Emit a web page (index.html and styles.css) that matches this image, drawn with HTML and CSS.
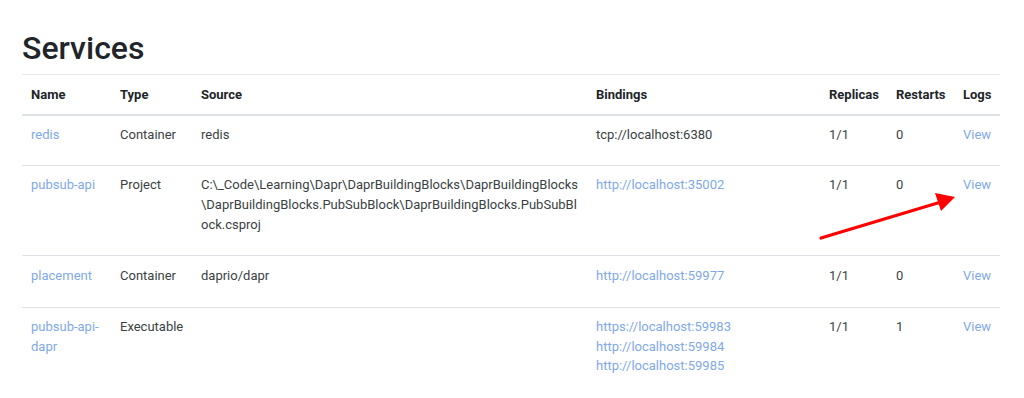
FILE: index.html
```html
<!DOCTYPE html>
<html lang="en">
<head>
<meta charset="utf-8">
<title>Services</title>
<link rel="stylesheet" href="styles.css">
</head>
<body>
<main class="page">
  <h1 class="title">Services</h1>
  <table class="services">
    <colgroup>
      <col class="c-name"><col class="c-type"><col class="c-source"><col class="c-bind"><col class="c-rep"><col class="c-res"><col class="c-logs">
    </colgroup>
    <thead>
      <tr><th>Name</th><th>Type</th><th>Source</th><th>Bindings</th><th>Replicas</th><th>Restarts</th><th>Logs</th></tr>
    </thead>
    <tbody>
      <tr>
        <td><a href="#">redis</a></td><td>Container</td><td>redis</td><td>tcp://localhost:6380</td><td>1/1</td><td>0</td><td><a href="#">View</a></td>
      </tr>
      <tr>
        <td><a href="#">pubsub-api</a></td><td>Project</td><td class="src">C:\_Code\Learning\Dapr\DaprBuildingBlocks\DaprBuildingBlocks\DaprBuildingBlocks.PubSubBlock\DaprBuildingBlocks.PubSubBlock.csproj</td><td><a href="#">http://localhost:35002</a></td><td>1/1</td><td>0</td><td><a href="#">View</a></td>
      </tr>
      <tr class="r3">
        <td><a href="#">placement</a></td><td>Container</td><td>daprio/dapr</td><td><a href="#">http://localhost:59977</a></td><td>1/1</td><td>0</td><td><a href="#">View</a></td>
      </tr>
      <tr>
        <td><a href="#">pubsub-api-dapr</a></td><td>Executable</td><td></td><td><div class="bind-list"><a href="#">https://localhost:59983</a><a href="#">http://localhost:59984</a><a href="#">http://localhost:59985</a></div></td><td>1/1</td><td>1</td><td><a href="#">View</a></td>
      </tr>
    </tbody>
  </table>
  <svg class="arrow" width="150" height="56" viewBox="0 0 150 56" aria-hidden="true">
    <line x1="4" y1="51" x2="124" y2="15" stroke="#f00" stroke-width="3.2" stroke-linecap="round"/>
    <polygon points="138,10 118,6 124,24" fill="#f00"/>
  </svg>
</main>
</body>
</html>
```
FILE: styles.css
```css
html, body {
  margin: 0;
  padding: 0;
  background: #fff;
}
body {
  font-family: Roboto, "Liberation Sans", Arial, sans-serif;
  font-size: 13px;
  line-height: 20px;
  color: #3a3f44;
}
.page {
  position: relative;
  padding: 28px 23px 0 22px;
}
.title {
  margin: 0 0 6px 0;
  font-size: 32px;
  line-height: 40px;
  font-weight: 500;
  color: #212529;
}
.services {
  width: 978px;
  table-layout: fixed;
  border-collapse: collapse;
}
.c-name { width: 89px; }
.c-type { width: 81px; }
.c-source { width: 395px; }
.c-bind { width: 233px; }
.c-rep { width: 67px; }
.c-res { width: 67px; }
.c-logs { width: 46px; }
.services th {
  text-align: left;
  font-weight: 700;
  color: #212529;
  padding: 10px 9px 9px 9px;
  border-top: 1px solid #e9ecef;
  border-bottom: 2px solid #dee2e6;
}
.services td {
  vertical-align: top;
  padding: 9px 9px 20px 9px;
  border-top: 1px solid #dee2e6;
}
.services tbody tr:first-child td { border-top: 0; }
.services tr.r3 td { padding-top: 10px; padding-bottom: 21px; }
.services td.src {
  padding-right: 7px;
  overflow-wrap: anywhere;
  word-break: break-all;
}
a {
  color: #7fa9ea;
  text-decoration: none;
}
.bind-list {
  display: flex;
  flex-direction: column;
  line-height: 19.5px;
}
.arrow {
  position: absolute;
  left: 817px;
  top: 187px;
}
```
